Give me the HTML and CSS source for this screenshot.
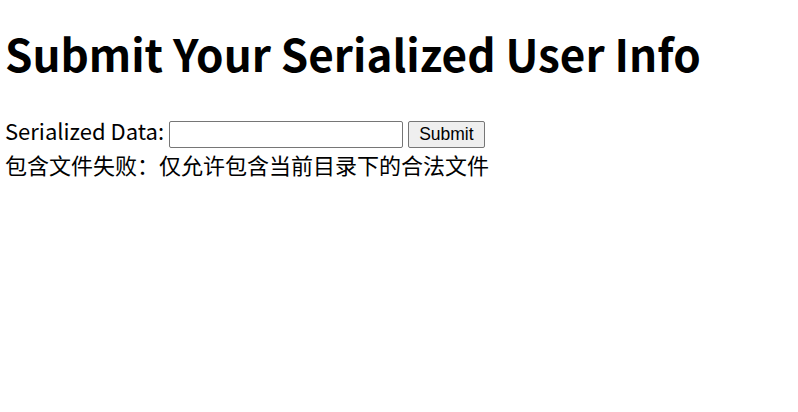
FILE: index.html
```html
<!DOCTYPE html>
<html>
<head>
<meta charset="utf-8">
<link rel="stylesheet" href="styles.css">
</head>
<body class="page">
<h1 class="title">Submit Your Serialized User Info</h1>
<form class="form">
<label class="label" for="data">Serialized Data:</label>
<input class="field" type="text" id="data" name="data">
<input class="btn" type="submit" value="Submit">
</form>
<div class="msg">包含文件失败：仅允许包含当前目录下的合法文件</div>
</body>
</html>
```
FILE: styles.css
```css
html, body {
  margin: 0;
  padding: 0;
}
.page {
  padding: 0 5px;
  font-family: "Noto Sans CJK SC", sans-serif;
  font-size: 22px;
  color: #000;
  background: #fff;
}
.title {
  font-size: 44px;
  font-weight: bold;
  margin: 21px 0 29px;
}
.form {
  margin: 0;
}
.field {
  font-family: "Liberation Sans", Arial, sans-serif;
  font-size: 17.5px;
  padding: 1px 2px;
  border: 1px solid #767676;
  border-radius: 2px;
  width: 234px;
  height: 27px;
  box-sizing: border-box;
}
.btn {
  font-family: "Liberation Sans", Arial, sans-serif;
  font-size: 17.5px;
  padding: 0 10px;
  border: 1px solid #767676;
  border-radius: 2px;
  background: #efefef;
  width: 77px;
  height: 27px;
  box-sizing: border-box;
}
```
